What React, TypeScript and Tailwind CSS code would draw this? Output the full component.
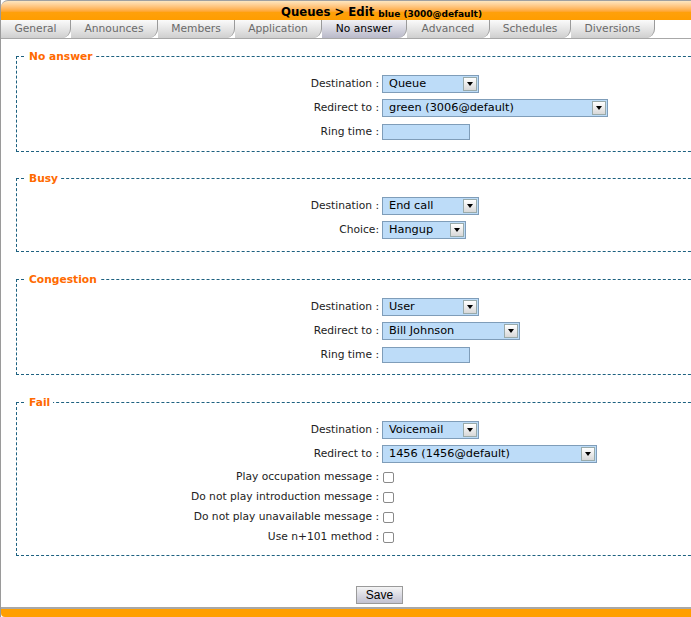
const tabs = [
  { name: 'General', w: 70 },
  { name: 'Announces', w: 87 },
  { name: 'Members', w: 77 },
  { name: 'Application', w: 87 },
  { name: 'No answer', w: 85, active: true },
  { name: 'Advanced', w: 83 },
  { name: 'Schedules', w: 81 },
  { name: 'Diversions', w: 84 },
]

function Select({ value, width }: { value: string; width: number }) {
  return (
    <div
      className="flex h-[18px] items-center border border-[#7f9db9] bg-[#bddcf8] pl-[6px] pr-[1px]"
      style={{ width }}
    >
      <span className="flex-1 truncate text-[11.3px] leading-none text-black">{value}</span>
      <span className="flex h-[14px] w-[14px] items-center justify-center border border-[#9aa] bg-gradient-to-b from-white to-[#d8d8d8]">
        <span className="h-0 w-0 border-x-[3px] border-t-[4px] border-x-transparent border-t-black" />
      </span>
    </div>
  )
}

function TextInput({ width }: { width: number }) {
  return <div className="h-[16px] border border-[#7f9db9] bg-[#bddcf8]" style={{ width }} />
}

function Checkbox() {
  return <div className="ml-[1px] h-[11px] w-[11px] rounded-[2px] border border-[#8a8a8a] bg-white" />
}

function Row({ label, children, h = 24, first }: { label: string; children: React.ReactNode; h?: number; first?: boolean }) {
  return (
    <div className={`flex items-center ${first ? 'mt-[1px]' : ''}`} style={{ height: h }}>
      <div className="w-[365px] pr-[3px] text-right text-[10.7px] text-[#222]">{label}</div>
      {children}
    </div>
  )
}

function Section({ title, children, pb }: { title: string; children: React.ReactNode; pb: string }) {
  return (
    <fieldset className={`ml-[15px] w-[700px] border border-dashed border-[#1d6180] pt-[9px] ${pb}`}>
      <legend className="ml-[9px] px-[3px] text-[10.7px] font-bold leading-[13px] text-[#ff6a00]">{title}</legend>
      {children}
    </fieldset>
  )
}

export default function App() {
  return (
    <div className="h-[617px] w-[691px] overflow-hidden bg-white font-['DejaVu_Sans',Verdana,sans-serif]">
      <div className="flex h-full flex-col border-l border-[#9a9a9a]">
        <div className="flex h-[20px] items-end justify-center rounded-tl-[7px] border-t border-[#a0a0a0] bg-gradient-to-b from-[#fde6c0] via-[#ffa00a] via-60% to-[#ff9d00] pb-[1px] pl-[71px]">
          <span className="text-[11.7px] font-bold leading-none text-black">Queues &gt; Edit</span>
          <span className="ml-[4px] text-[9px] font-bold leading-none text-black">blue (3000@default)</span>
        </div>
        <div className="flex h-[19px] border-b border-[#a8a8a8]">
          {tabs.map((t) => (
            <div
              key={t.name}
              className={`flex items-center justify-center rounded-br-[9px] border-r border-[#9a9a9a] pt-[1px] text-[10.7px] ${
                t.active
                  ? 'bg-gradient-to-b from-[#f2f2f6] to-[#b9b9c9] text-black'
                  : 'bg-gradient-to-b from-[#fbfbfb] to-[#cfcfcf] text-[#6a6a6a]'
              }`}
              style={{ width: t.w }}
            >
              {t.name}
            </div>
          ))}
        </div>
        <div className="flex flex-1 flex-col pt-[11px]">
          <Section title="No answer" pb="pb-[7px]">
            <Row label="Destination :">
              <Select value="Queue" width={97} />
            </Row>
            <Row label="Redirect to :">
              <Select value="green (3006@default)" width={226} />
            </Row>
            <Row label="Ring time :">
              <TextInput width={88} />
            </Row>
          </Section>
          <div className="h-[20px]" />
          <Section title="Busy" pb="pb-[9px]">
            <Row label="Destination :">
              <Select value="End call" width={97} />
            </Row>
            <Row label="Choice:">
              <Select value="Hangup" width={84} />
            </Row>
          </Section>
          <div className="h-[21px]" />
          <Section title="Congestion" pb="pb-[7px]">
            <Row label="Destination :">
              <Select value="User" width={97} />
            </Row>
            <Row label="Redirect to :">
              <Select value="Bill Johnson" width={138} />
            </Row>
            <Row label="Ring time :">
              <TextInput width={88} />
            </Row>
          </Section>
          <div className="h-[21px]" />
          <Section title="Fail" pb="pb-[8px]">
            <Row label="Destination :">
              <Select value="Voicemail" width={97} />
            </Row>
            <Row label="Redirect to :">
              <Select value="1456 (1456@default)" width={215} />
            </Row>
            <Row label="Play occupation message :" h={20} first>
              <Checkbox />
            </Row>
            <Row label="Do not play introduction message :" h={20}>
              <Checkbox />
            </Row>
            <Row label="Do not play unavailable message :" h={20}>
              <Checkbox />
            </Row>
            <Row label="Use n+101 method :" h={20}>
              <Checkbox />
            </Row>
          </Section>
          <div className="flex flex-1 items-start justify-center pt-[30px]">
            <button className="ml-[67px] h-[18px] w-[47px] border border-[#9a9a9a] bg-gradient-to-b from-[#f4f4f4] to-[#c2c2d2] font-['Liberation_Sans',Arial,sans-serif] text-[12px] leading-none text-black">
              Save
            </button>
          </div>
        </div>
        <div className="h-[10px] rounded-bl-[4px] border-t-2 border-[#a8a8a8] bg-[#ff9f00]" />
      </div>
    </div>
  )
}
